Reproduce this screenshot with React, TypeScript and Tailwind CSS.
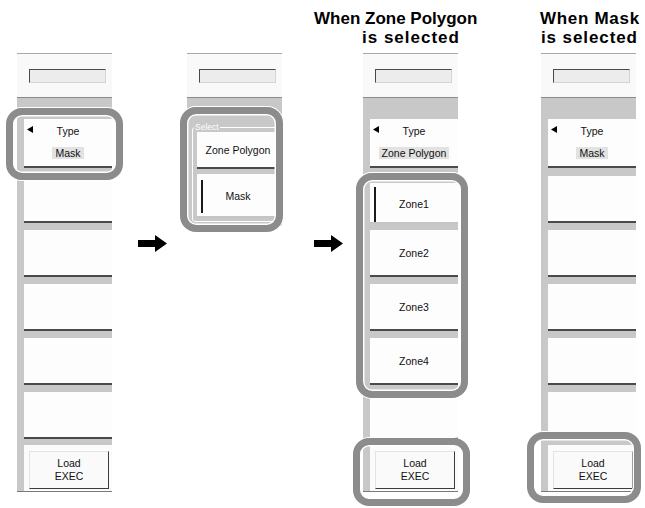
import React from "react";

function Tri() {
  return (
    <svg width="6" height="7" viewBox="0 0 6 7" className="block">
      <polygon points="6,0 6,7 0,3.5" fill="#000" />
    </svg>
  );
}

function Arrow({ className }: { className: string }) {
  return (
    <div className={className}>
      <svg width="29" height="17" viewBox="0 0 29 17" className="block">
        <polygon points="0,5 17,5 17,0 29,8.5 17,17 17,12 0,12" fill="#000" />
      </svg>
    </div>
  );
}

function Ring({ className }: { className: string }) {
  return (
    <div
      className={
        "absolute pointer-events-none rounded-[16px] border-[7px] border-[#8c8c8c] shadow-[inset_0_0_0_1.5px_#ffffff,0_0_0_1px_#ffffff] " +
        className
      }
    />
  );
}

function TopArea() {
  return (
    <div className="h-[45px] bg-[#f9f9f9] border-t border-t-[#a8a8a8] border-b border-b-[#8a8a8a] pt-[15px] pl-[12px]">
      <div className="w-[77px] h-[14px] bg-[#ececec] border border-t-[#4a4a4a] border-l-[#4a4a4a] border-r-[#d4d4d4] border-b-[#d4d4d4]" />
    </div>
  );
}

function TypeCell({ value }: { value: string }) {
  return (
    <div className="h-[49px] bg-[#fdfdfd] border-b-2 border-b-[#4a4a4a] pt-[5px]">
      <div className="grid grid-cols-[12px_1fr_12px] h-[14px] items-start">
        <div className="pl-[3px] pt-[2px]">
          <Tri />
        </div>
        <div className="text-center leading-[14px]">Type</div>
        <div />
      </div>
      <div className="mt-[9px] flex justify-center">
        <span className="bg-[#e2e2e2] px-[3px] h-[12px] leading-[12px]">{value}</span>
      </div>
    </div>
  );
}

function Cell({ label }: { label?: string }) {
  return (
    <div className="h-[47px] bg-[#fdfdfd] border-b-2 border-b-[#4a4a4a] flex items-center justify-center pt-[3px]">
      {label}
    </div>
  );
}

function LoadArea() {
  return (
    <div className="mt-[6px] h-[46px] bg-[#fbfbfb] pt-[6px] pl-[5px]">
      <div className="w-[80px] h-[38px] bg-[#fafafa] border border-t-[#e4e4e4] border-l-[#e4e4e4] border-r-[#3c3c3c] border-b-[#3c3c3c] flex flex-col items-center justify-center leading-[13px]">
        <div>Load</div>
        <div>EXEC</div>
      </div>
    </div>
  );
}

function Panel1() {
  return (
    <div className="relative w-[95px]">
      <TopArea />
      <div className="bg-[#c8c8c8] pl-[7px] pt-[21px]">
        <TypeCell value="Mask" />
        <div className="mt-[8px]"><Cell /></div>
        <div className="mt-[7px]"><Cell /></div>
        <div className="mt-[7px]"><Cell /></div>
        <div className="mt-[7px]"><Cell /></div>
        <div className="mt-[7px]"><Cell /></div>
        <LoadArea />
      </div>
      <div className="h-px bg-[#7a7a7a]" />
      <Ring className="left-[-11px] top-[55px] w-[117px] h-[72px]" />
    </div>
  );
}

function Panel2() {
  return (
    <div className="relative w-[95px]">
      <TopArea />
      <div className="bg-[#c8c8c8] h-[128px] pt-[29px]">
        <div className="ml-[5px] mr-[2px] border border-white rounded-[3px] pl-[4px] pb-[3px]">
          <div className="-mt-[6px] -ml-[3px] w-fit bg-[#c8c8c8] px-[1px] text-[8.5px] leading-[10px] text-white">
            Select
          </div>
          <div className="h-[37px] bg-[#fdfdfd] border-b-2 border-b-[#4a4a4a] flex items-center justify-center pt-[2px]">
            Zone Polygon
          </div>
          <div className="mt-[5px] h-[44px] bg-[#fdfdfd] border-b-2 border-b-[#c4c4c4] pl-[4px] pt-[6px] pb-[3px] flex">
            <div className="flex-1 border-l-2 border-l-[#1a1a1a] flex items-center justify-center pr-[6px]">
              Mask
            </div>
          </div>
        </div>
      </div>
      <Ring className="left-[-7px] top-[54px] w-[103px] h-[125px]" />
    </div>
  );
}

function Panel3() {
  return (
    <div className="relative w-[95px]">
      <TopArea />
      <div className="bg-[#c8c8c8] pl-[7px] pt-[21px]">
        <TypeCell value="Zone Polygon" />
        <div className="mt-[15px] h-[41px] bg-[#fdfdfd] border-b-2 border-b-[#c4c4c4] pl-[4px] pt-[4px] flex">
          <div className="flex-1 border-l-2 border-l-[#1a1a1a] flex items-center justify-center pr-[6px]">
            Zone1
          </div>
        </div>
        <div className="mt-[6px]"><Cell label="Zone2" /></div>
        <div className="mt-[7px]"><Cell label="Zone3" /></div>
        <div className="mt-[7px]"><Cell label="Zone4" /></div>
        <div className="mt-[7px]"><Cell /></div>
        <LoadArea />
      </div>
      <div className="h-px bg-[#7a7a7a]" />
      <Ring className="left-[-7px] top-[120px] w-[112px] h-[225px]" />
      <Ring className="left-[-10px] top-[385px] w-[117px] h-[68px]" />
    </div>
  );
}

function Panel4() {
  return (
    <div className="relative w-[95px]">
      <TopArea />
      <div className="bg-[#c8c8c8] pl-[7px] pt-[21px]">
        <TypeCell value="Mask" />
        <div className="mt-[8px]"><Cell /></div>
        <div className="mt-[7px]"><Cell /></div>
        <div className="mt-[7px]"><Cell /></div>
        <div className="mt-[7px]"><Cell /></div>
        <div className="mt-[7px]"><Cell /></div>
        <LoadArea />
      </div>
      <div className="h-px bg-[#7a7a7a]" />
      <Ring className="left-[-14px] top-[379px] w-[114px] h-[71px]" />
    </div>
  );
}

export default function App() {
  return (
    <div className="w-[645px] h-[508px] bg-white overflow-hidden font-['Liberation_Sans',Arial,sans-serif] text-[10.5px] text-[#111]">
      <div className="flex h-[53px] pt-[9px] font-bold text-[17px] leading-[19px] text-black">
        <div className="ml-[314px] w-[226px]">
          <div className="whitespace-nowrap">When Zone Polygon</div>
          <div className="ml-[48px] whitespace-nowrap tracking-[1px]">is selected</div>
        </div>
        <div>
          <div className="whitespace-nowrap tracking-[0.7px]">When Mask</div>
          <div className="ml-[1px] whitespace-nowrap tracking-[0.9px]">is selected</div>
        </div>
      </div>
      <div className="flex items-start">
        <div className="ml-[17px]">
          <Panel1 />
        </div>
        <Arrow className="ml-[26px] mt-[182px]" />
        <div className="ml-[20px]">
          <Panel2 />
        </div>
        <Arrow className="ml-[32px] mt-[182px]" />
        <div className="ml-[20px]">
          <Panel3 />
        </div>
        <div className="ml-[83px]">
          <Panel4 />
        </div>
      </div>
    </div>
  );
}
